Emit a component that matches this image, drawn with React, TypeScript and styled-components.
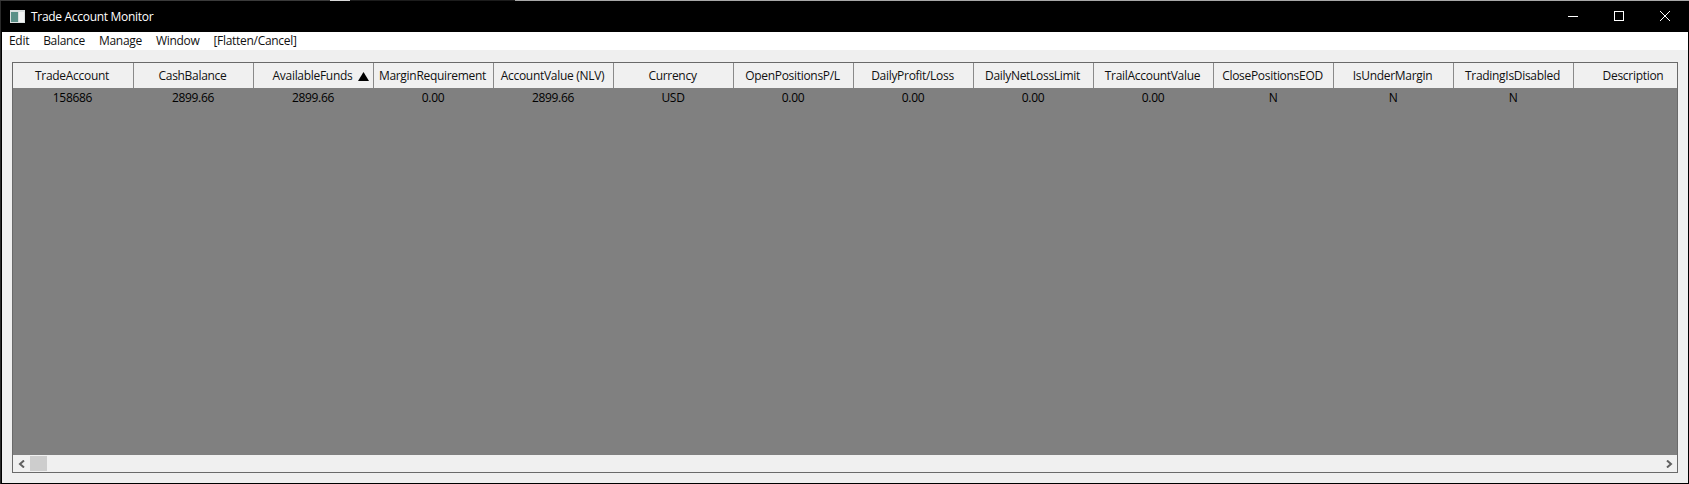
import React from "react";
import styled, { createGlobalStyle } from "styled-components";

const GlobalStyle = createGlobalStyle`
  html, body {
    margin: 0;
    padding: 0;
    background: #000;
    overflow: hidden;
  }
`;

const Desktop = styled.div`
  width: 1689px;
  height: 484px;
  background: #2a2a2a;
  display: flex;
  flex-direction: column;
  overflow: hidden;
  font-family: "Open Sans", "Noto Sans", sans-serif;
  font-size: 12px;
  letter-spacing: -0.3px;
`;

// sliver of whatever sat behind the window in the capture
const BehindStrip = styled.div`
  height: 1px;
  flex: none;
  background: linear-gradient(
    to right,
    #3a3a3a 0,
    #3a3a3a 330px,
    #d8d8d8 330px,
    #d8d8d8 350px,
    #1c1c1c 350px,
    #1c1c1c 515px,
    #a8a8a8 515px,
    #a8a8a8 100%
  );
`;

const Window = styled.div`
  flex: 1;
  min-height: 0;
  margin-left: 1px;
  border: 1px solid #000;
  display: flex;
  flex-direction: column;
`;

const TitleBar = styled.div`
  height: 30px;
  flex: none;
  box-sizing: border-box;
  padding: 0 0 2px 8px;
  background: #000;
  display: flex;
  align-items: center;
  color: #fff;
`;

const AppIcon = styled.svg`
  width: 15px;
  height: 13px;
  margin-right: 6px;
  flex: none;
`;

const Title = styled.span`
  flex: 1;
`;

const CaptionButton = styled.button`
  width: 46px;
  height: 28px;
  flex: none;
  border: 0;
  padding: 0;
  background: transparent;
  display: flex;
  align-items: center;
  justify-content: center;
  svg {
    width: 10px;
    height: 10px;
    stroke: #fff;
    fill: none;
    stroke-width: 1;
  }
`;

const MenuBar = styled.div`
  height: 18px;
  flex: none;
  background: #fff;
  display: flex;
  align-items: center;
  color: #111;
  padding-left: 7px;
  gap: 14px;
  line-height: 18px;
`;

const Content = styled.div`
  flex: 1;
  min-height: 0;
  background: #efefef;
  padding: 12px 10px 10px 10px;
  display: flex;
`;

const Grid = styled.div`
  flex: 1;
  min-width: 0;
  border: 1px solid #696969;
  display: flex;
  flex-direction: column;
`;

const HeaderRow = styled.div`
  height: 25px;
  flex: none;
  display: flex;
  background: #f0f0f0;
`;

const HeaderCell = styled.div<{ $first?: boolean; $last?: boolean }>`
  position: relative;
  width: ${(p) => (p.$first ? 121 : 120)}px;
  flex: none;
  box-sizing: border-box;
  padding-right: 2px;
  border-right: ${(p) => (p.$last ? "0" : "1px solid #8a8a8a")};
  display: flex;
  align-items: center;
  justify-content: center;
  color: #111;
  white-space: nowrap;
`;

const SortArrow = styled.svg`
  position: absolute;
  right: 4px;
  top: 9px;
  width: 11px;
  height: 9px;
  fill: #000;
`;

const Body = styled.div`
  flex: 1;
  min-height: 0;
  background: #808080;
`;

const DataRow = styled.div`
  height: 19px;
  display: flex;
`;

const DataCell = styled.div<{ $first?: boolean }>`
  width: ${(p) => (p.$first ? 121 : 120)}px;
  flex: none;
  box-sizing: border-box;
  padding-right: 2px;
  display: flex;
  align-items: center;
  justify-content: center;
  color: #000;
`;

const ScrollBar = styled.div`
  height: 17px;
  flex: none;
  background: #f0f0f0;
  display: flex;
  align-items: center;
`;

const ScrollArrow = styled.div`
  width: 17px;
  height: 17px;
  flex: none;
  display: flex;
  align-items: center;
  justify-content: center;
  svg {
    width: 8px;
    height: 8px;
    fill: none;
    stroke: #606060;
    stroke-width: 2;
  }
`;

const ScrollTrack = styled.div`
  flex: 1;
`;

const ScrollThumb = styled.div`
  width: 17px;
  height: 15px;
  background: #cdcdcd;
`;

const columns = [
  { name: "TradeAccount", value: "158686" },
  { name: "CashBalance", value: "2899.66" },
  { name: "AvailableFunds", value: "2899.66", sorted: true },
  { name: "MarginRequirement", value: "0.00" },
  { name: "AccountValue (NLV)", value: "2899.66" },
  { name: "Currency", value: "USD" },
  { name: "OpenPositionsP/L", value: "0.00" },
  { name: "DailyProfit/Loss", value: "0.00" },
  { name: "DailyNetLossLimit", value: "0.00" },
  { name: "TrailAccountValue", value: "0.00" },
  { name: "ClosePositionsEOD", value: "N" },
  { name: "IsUnderMargin", value: "N" },
  { name: "TradingIsDisabled", value: "N" },
  { name: "Description", value: "" },
];

const App = () => (
  <Desktop>
    <GlobalStyle />
    <BehindStrip />
    <Window>
      <TitleBar>
        <AppIcon viewBox="0 0 15 13">
          <rect width="15" height="13" fill="#d9dfdf" />
          <rect x="1" y="2" width="7" height="10" fill="#5a9088" />
          <rect x="9" y="2" width="5" height="10" fill="#f2f4f4" />
        </AppIcon>
        <Title>Trade Account Monitor</Title>
        <CaptionButton>
          <svg viewBox="0 0 10 10">
            <path d="M0 5.5H10" />
          </svg>
        </CaptionButton>
        <CaptionButton>
          <svg viewBox="0 0 10 10">
            <rect x="0.5" y="0.5" width="9" height="9" />
          </svg>
        </CaptionButton>
        <CaptionButton>
          <svg viewBox="0 0 10 10">
            <path d="M0 0L10 10M10 0L0 10" />
          </svg>
        </CaptionButton>
      </TitleBar>
      <MenuBar>
        <span>Edit</span>
        <span>Balance</span>
        <span>Manage</span>
        <span>Window</span>
        <span>[Flatten/Cancel]</span>
      </MenuBar>
      <Content>
        <Grid>
          <HeaderRow>
            {columns.map((c, i) => (
              <HeaderCell key={c.name} $first={i === 0} $last={i === columns.length - 1}>
                {c.name}
                {c.sorted && (
                  <SortArrow viewBox="0 0 11 9">
                    <path d="M5.5 0L11 9H0Z" />
                  </SortArrow>
                )}
              </HeaderCell>
            ))}
          </HeaderRow>
          <Body>
            <DataRow>
              {columns.map((c, i) => (
                <DataCell key={c.name} $first={i === 0}>
                  {c.value}
                </DataCell>
              ))}
            </DataRow>
          </Body>
          <ScrollBar>
            <ScrollArrow>
              <svg viewBox="0 0 8 8">
                <path d="M6 0.5L2 4L6 7.5" />
              </svg>
            </ScrollArrow>
            <ScrollThumb />
            <ScrollTrack />
            <ScrollArrow>
              <svg viewBox="0 0 8 8">
                <path d="M2 0.5L6 4L2 7.5" />
              </svg>
            </ScrollArrow>
          </ScrollBar>
        </Grid>
      </Content>
    </Window>
  </Desktop>
);

export default App;
